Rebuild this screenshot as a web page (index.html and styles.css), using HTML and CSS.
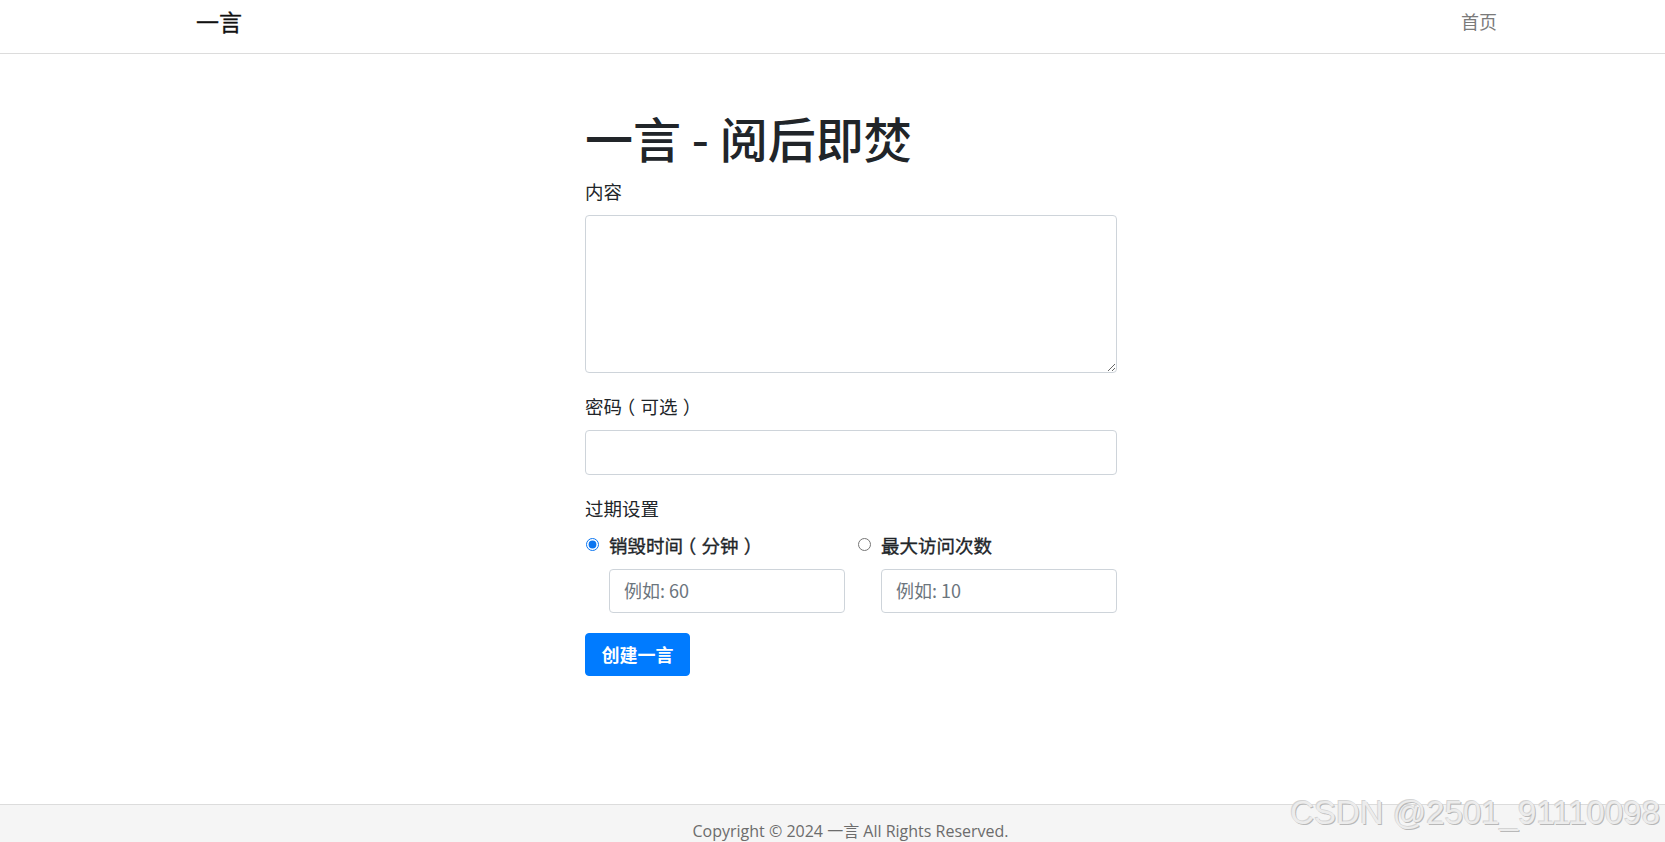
FILE: index.html
```html
<!DOCTYPE html>
<html lang="zh-CN">
<head>
<meta charset="utf-8">
<title>一言 - 阅后即焚</title>
<link rel="stylesheet" href="styles.css">
</head>
<body>
<nav class="navbar">
  <div class="nav-inner">
    <a class="brand" href="#">一言</a>
    <a class="nav-link" href="#">首页</a>
  </div>
</nav>
<main class="content">
  <div class="form-col">
    <h1 class="title">一言 - 阅后即焚</h1>
    <form>
      <div class="group">
        <label class="label" for="content">内容</label>
        <textarea id="content" class="control area" rows="5"></textarea>
      </div>
      <div class="group">
        <label class="label" for="pwd">密码<span class="po">（</span>可选<span class="pc">）</span></label>
        <input id="pwd" class="control" type="password">
      </div>
      <div class="group">
        <div class="label">过期设置</div>
        <div class="expire-row">
          <div class="expire-col">
            <label class="check"><input type="radio" name="exp" checked><span>销毁时间<span class="po">（</span>分钟<span class="pc">）</span></span></label>
            <input class="control small" type="text" placeholder="例如: 60">
          </div>
          <div class="expire-col">
            <label class="check"><input type="radio" name="exp"><span>最大访问次数</span></label>
            <input class="control small" type="text" placeholder="例如: 10">
          </div>
        </div>
      </div>
      <button class="btn" type="button">创建一言</button>
    </form>
  </div>
</main>
<footer class="footer">
  <span>Copyright © 2024 一言 All Rights Reserved.</span>
  <div class="watermark">CSDN @2501_91110098</div>
</footer>
</body>
</html>
```

FILE: styles.css
```css
html, body {
  margin: 0;
  padding: 0;
}
body {
  font-family: "Noto Sans", "Noto Sans CJK SC", sans-serif;
  font-size: 18px;
  color: #212529;
  background: #fff;
  overflow: hidden;
}
.navbar {
  height: 53px;
  border-bottom: 1px solid #dcdcdc;
  box-sizing: content-box;
}
.nav-inner {
  margin-left: 196px;
  width: 1301px;
  height: 42px;
  display: flex;
  align-items: center;
  justify-content: space-between;
}
.brand {
  font-family: "Noto Sans CJK SC", sans-serif;
  font-size: 23px;
  color: #111;
  text-decoration: none;
  font-weight: 400;
  -webkit-text-stroke: 0.3px #111;
}
.nav-link {
  font-family: "Noto Sans CJK SC", sans-serif;
  font-size: 18px;
  color: #7a7a7a;
  text-decoration: none;
}
.content {
  height: 750px;
}
.form-col {
  width: 532px;
  margin-left: 585px;
  padding-top: 55px;
}
.title {
  font-family: "Noto Sans CJK SC", sans-serif;
  font-size: 48px;
  font-weight: 500;
  line-height: 1.2;
  margin: 0 0 11px;
  color: #212529;
}
.group {
  margin-bottom: 20px;
}
.label {
  display: block;
  font-family: "Noto Sans CJK SC", sans-serif;
  font-size: 18.5px;
  line-height: 27px;
  margin-bottom: 10px;
  color: #212529;
}
.po,
.pc {
  font-feature-settings: "halt" 1;
}
.po {
  margin-left: 0.22em;
  margin-right: 0.28em;
}
.pc {
  margin-left: 0.28em;
  margin-right: 0.22em;
}
.control {
  display: block;
  box-sizing: border-box;
  width: 100%;
  height: 45px;
  padding: 7px 14px;
  font-family: "Noto Sans", "Noto Sans CJK SC", sans-serif;
  font-size: 18px;
  border: 1px solid #ced4da;
  border-radius: 4px;
  background: #fff;
  color: #495057;
  outline: none;
}
.area {
  height: 158px;
  resize: vertical;
}
.control::placeholder {
  color: #6c757d;
  font-family: "Noto Sans CJK SC", sans-serif;
}
.expire-row {
  display: flex;
  gap: 12px;
  margin-top: 8px;
}
.expire-col {
  flex: 1;
}
.check {
  display: flex;
  align-items: center;
  font-family: "Noto Sans CJK SC", sans-serif;
  font-size: 18.5px;
  line-height: 26px;
  margin-bottom: 11px;
  font-weight: 400;
  -webkit-text-stroke: 0.35px #212529;
}
.check input {
  margin: 0 10px 0 1px;
  width: 13px;
  height: 13px;
  accent-color: #0b75f0;
}
.small {
  margin-left: 24px;
  width: calc(100% - 24px);
  height: 44px;
}
.btn {
  display: block;
  margin-top: 0;
  width: 105px;
  height: 43px;
  background: #007bff;
  border: 1px solid #007bff;
  border-radius: 4px;
  color: #fff;
  font-family: "Noto Sans CJK SC", sans-serif;
  font-size: 18px;
  font-weight: 700;
  padding: 0;
}
.footer {
  position: relative;
  height: 80px;
  border-top: 1px solid #dcdcdc;
  background: #f5f5f5;
  text-align: center;
  padding: 13px 0 0 36px;
  box-sizing: border-box;
  font-family: "Open Sans", "Noto Sans CJK SC", sans-serif;
  font-size: 16px;
  color: #6c6c6c;
}
.watermark {
  position: absolute;
  right: 5px;
  top: -11px;
  font-family: "Liberation Sans", sans-serif;
  font-size: 33px;
  color: #ececec;
  text-shadow: 1px 1px 0 #b8b8b8, -1px -1px 0 #d4d4d4;
}
```
